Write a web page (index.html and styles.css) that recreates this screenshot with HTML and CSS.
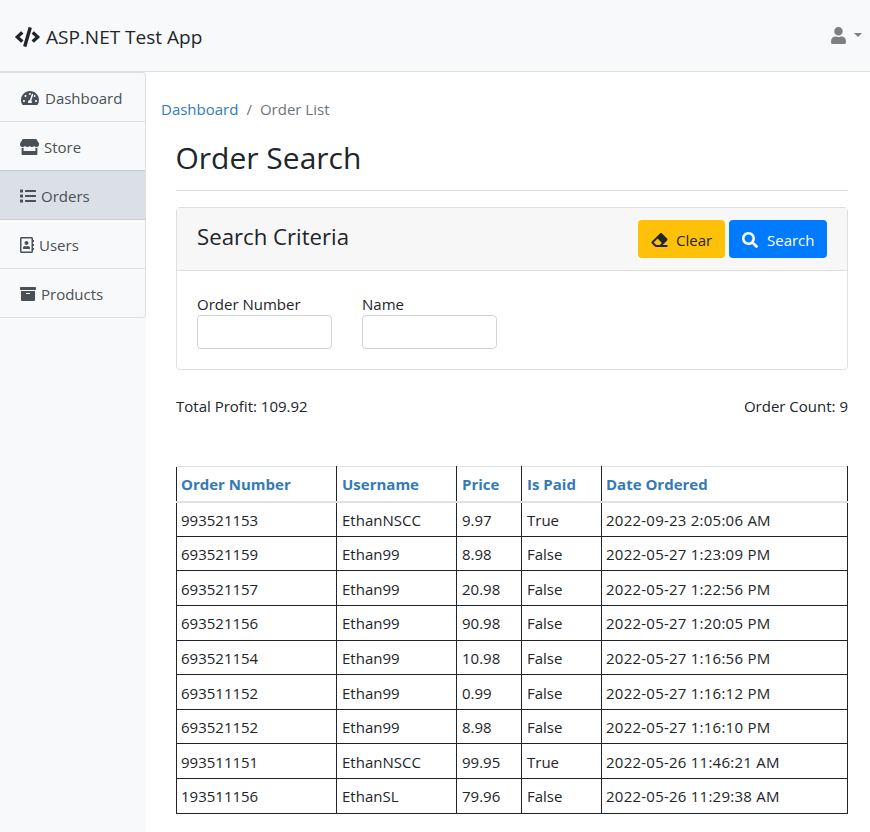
FILE: index.html
```html
<!DOCTYPE html>
<html lang="en">
<head>
    <meta charset="UTF-8">
    <title>Order Search</title>
    <link rel="stylesheet" href="styles.css">
</head>
<body>
    <header class="topbar">
        <a class="brand" href="#">
            <svg class="brand-icon" viewBox="0 0 640 512"><path d="M278.9 511.5l-61-17.7c-6.4-1.8-10-8.5-8.2-14.9L346.2 8.7c1.8-6.4 8.5-10 14.9-8.2l61 17.7c6.4 1.8 10 8.5 8.2 14.9L293.8 503.3c-1.9 6.4-8.5 10.1-14.9 8.2zm-114-112.2l43.5-46.4c4.6-4.9 4.3-12.7-.8-17.2L117 256l90.6-79.7c5.1-4.5 5.5-12.3.8-17.2l-43.5-46.4c-4.5-4.8-12.1-5.1-17-.5L3.8 247.2c-5.1 4.7-5.1 12.8 0 17.5l144.1 135.1c4.9 4.6 12.5 4.4 17-.5zm327.2.6l144.1-135.1c5.1-4.7 5.1-12.8 0-17.5L492.1 112.1c-4.8-4.5-12.4-4.3-17 .5L431.6 159c-4.6 4.9-4.3 12.7.8 17.2L523 256l-90.6 79.7c-5.1 4.5-5.5 12.3-.8 17.2l43.5 46.4c4.5 4.9 12.1 5.1 17 .6z"/></svg>
            <span>ASP.NET Test App</span>
        </a>
        <a class="user-menu" href="#">
            <svg class="user-icon" viewBox="0 0 448 512"><path d="M224 256c70.7 0 128-57.3 128-128S294.7 0 224 0 96 57.3 96 128s57.3 128 128 128zm89.6 32h-16.7c-22.2 10.2-46.9 16-72.9 16s-50.6-5.8-72.9-16h-16.7C60.2 288 0 348.2 0 422.4V464c0 26.5 21.5 48 48 48h352c26.5 0 48-21.5 48-48v-41.6c0-74.2-60.2-134.4-134.4-134.4z"/></svg>
            <span class="caret"></span>
        </a>
    </header>
    <div class="layout">
        <aside class="sidebar">
            <nav class="side-list">
                <a class="side-item side-dashboard" href="#">
                    <svg class="side-icon dash" viewBox="0 0 576 512"><path d="M288 32C128.94 32 0 160.94 0 320c0 52.8 14.25 102.26 39.06 144.8 5.61 9.62 16.3 15.2 27.44 15.2h443c11.14 0 21.83-5.58 27.44-15.2C561.75 422.26 576 372.8 576 320c0-159.06-128.94-288-288-288zm0 64c14.71 0 26.58 10.13 30.32 23.65-1.11 2.26-2.64 4.23-3.45 6.67l-9.22 27.67c-5.13 3.49-10.97 6.01-17.64 6.01-17.67 0-32-14.33-32-32S270.33 96 288 96zM96 384c-17.67 0-32-14.33-32-32s14.33-32 32-32 32 14.33 32 32-14.33 32-32 32zm48-160c-17.67 0-32-14.33-32-32s14.33-32 32-32 32 14.33 32 32-14.33 32-32 32zm246.77-72.41l-61.33 184C343.13 347.33 352 364.54 352 384c0 11.72-3.38 22.55-8.88 32H232.88c-5.5-9.45-8.88-20.28-8.88-32 0-33.94 26.5-61.43 59.9-63.59l61.34-184.01c4.17-12.56 17.73-19.45 30.36-15.17 12.57 4.19 19.35 17.79 15.17 30.36zm14.66 57.2l15.52-46.55c3.47-1.29 7.13-2.23 11.05-2.23 17.67 0 32 14.33 32 32s-14.33 32-32 32c-11.38-.01-20.89-6.28-26.57-15.22zM480 384c-17.67 0-32-14.33-32-32s14.33-32 32-32 32 14.33 32 32-14.33 32-32 32z"/></svg>
                    <span>Dashboard</span>
                </a>
                <a class="side-item" href="#">
                    <svg class="side-icon store" viewBox="0 0 616 512"><path d="M602 118.6L537.1 15C531.3 5.7 521 0 510 0H106C95 0 84.7 5.7 78.9 15L14 118.6c-33.9 54.1-3.9 129.3 59.4 137.9 4.6.6 9.2.9 13.7.9 29.9 0 56.4-13.1 74.6-33.4 18.2 20.2 44.8 33.4 74.6 33.4 29.9 0 56.4-13.1 74.6-33.4 18.2 20.2 44.8 33.4 74.6 33.4 30 0 56.5-13.1 74.7-33.4 18.2 20.2 44.8 33.4 74.6 33.4 4.6 0 9.1-.3 13.7-.9 63.5-8.5 93.6-83.7 59.6-137.9zM529.5 288c-10 0-19.9-1.5-29.5-3.8V384H116v-99.8c-9.6 2.2-19.5 3.8-29.5 3.8-6 0-12.1-.4-18-1.2-5.6-.8-11.1-2.1-16.4-3.6V480c0 17.7 14.3 32 32 32h448c17.7 0 32-14.3 32-32V283.2c-5.4 1.6-10.8 2.9-16.4 3.6-6.1.8-12.1 1.2-18.2 1.2z"/></svg>
                    <span>Store</span>
                </a>
                <a class="side-item active" href="#">
                    <svg class="side-icon list" viewBox="0 0 512 512"><path d="M80 368H16a16 16 0 0 0-16 16v64a16 16 0 0 0 16 16h64a16 16 0 0 0 16-16v-64a16 16 0 0 0-16-16zm0-320H16A16 16 0 0 0 0 64v64a16 16 0 0 0 16 16h64a16 16 0 0 0 16-16V64a16 16 0 0 0-16-16zm0 160H16a16 16 0 0 0-16 16v64a16 16 0 0 0 16 16h64a16 16 0 0 0 16-16v-64a16 16 0 0 0-16-16zm416 176H176a16 16 0 0 0-16 16v32a16 16 0 0 0 16 16h320a16 16 0 0 0 16-16v-32a16 16 0 0 0-16-16zm0-320H176a16 16 0 0 0-16 16v32a16 16 0 0 0 16 16h320a16 16 0 0 0 16-16V80a16 16 0 0 0-16-16zm0 160H176a16 16 0 0 0-16 16v32a16 16 0 0 0 16 16h320a16 16 0 0 0 16-16v-32a16 16 0 0 0-16-16z"/></svg>
                    <span>Orders</span>
                </a>
                <a class="side-item" href="#">
                    <svg class="side-icon book" viewBox="0 0 448 512"><path d="M436 160c6.6 0 12-5.4 12-12v-40c0-6.6-5.4-12-12-12h-20V48c0-26.5-21.5-48-48-48H48C21.5 0 0 21.5 0 48v416c0 26.5 21.5 48 48 48h320c26.5 0 48-21.5 48-48v-48h20c6.6 0 12-5.4 12-12v-40c0-6.6-5.4-12-12-12h-20v-64h20c6.6 0 12-5.4 12-12v-40c0-6.6-5.4-12-12-12h-20v-64h20zm-68 304H48V48h320v416zM208 256c35.3 0 64-28.7 64-64s-28.7-64-64-64-64 28.7-64 64 28.7 64 64 64zm-89.6 128h179.2c12.4 0 22.4-8.6 22.4-19.2v-19.2c0-31.8-30.1-57.6-67.2-57.6-10.8 0-18.7 8-44.8 8-26.9 0-33.4-8-44.8-8-37.1 0-67.2 25.8-67.2 57.6v19.2c0 10.6 10 19.2 22.4 19.2z"/></svg>
                    <span>Users</span>
                </a>
                <a class="side-item" href="#">
                    <svg class="side-icon list" viewBox="0 0 512 512"><path d="M32 448c0 17.7 14.3 32 32 32h384c17.7 0 32-14.3 32-32V160H32v288zm160-212c0-6.6 5.4-12 12-12h104c6.6 0 12 5.4 12 12v8c0 6.6-5.4 12-12 12H204c-6.6 0-12-5.4-12-12v-8zM480 32H32C14.3 32 0 46.3 0 64v48c0 8.8 7.2 16 16 16h480c8.8 0 16-7.2 16-16V64c0-17.7-14.3-32-32-32z"/></svg>
                    <span>Products</span>
                </a>
            </nav>
        </aside>
        <main class="content">
            <ol class="breadcrumb">
                <li><a href="#">Dashboard</a></li>
                <li class="crumb-sep">/</li>
                <li class="crumb-current">Order List</li>
            </ol>
            <div class="page">
                <h1 class="page-title">Order Search</h1>
                <section class="card">
                    <div class="card-header">
                        <h2 class="card-title">Search Criteria</h2>
                        <div class="card-actions">
                            <button class="btn btn-clear" type="button">
                                <svg class="btn-icon" viewBox="0 0 512 512"><path d="M497.941 273.941c18.745-18.745 18.745-49.137 0-67.882l-160-160c-18.745-18.745-49.136-18.746-67.883 0l-256 256c-18.745 18.745-18.745 49.137 0 67.882l96 96A48.004 48.004 0 0 0 144 480h356c6.627 0 12-5.373 12-12v-40c0-6.627-5.373-12-12-12H355.883l142.058-142.059zm-302.627-62.627l137.373 137.373L265.373 416H150.628l-80-80 124.686-124.686z"/></svg>
                                <span>Clear</span>
                            </button>
                            <button class="btn btn-search" type="button">
                                <svg class="btn-icon" viewBox="0 0 512 512"><path d="M505 442.7L405.3 343c-4.5-4.5-10.6-7-17-7H372c27.6-35.3 44-79.7 44-128C416 93.1 322.9 0 208 0S0 93.1 0 208s93.1 208 208 208c48.3 0 92.7-16.4 128-44v16.3c0 6.4 2.5 12.5 7 17l99.7 99.7c9.4 9.4 24.6 9.4 33.9 0l28.3-28.3c9.4-9.4 9.4-24.6.1-34zM208 336c-70.7 0-128-57.2-128-128 0-70.7 57.2-128 128-128 70.7 0 128 57.2 128 128 0 70.7-57.2 128-128 128z"/></svg>
                                <span>Search</span>
                            </button>
                        </div>
                    </div>
                    <form class="card-body">
                        <label class="field">
                            <span>Order Number</span>
                            <input type="text">
                        </label>
                        <label class="field">
                            <span>Name</span>
                            <input type="text">
                        </label>
                    </form>
                </section>
                <div class="totals">
                    <span>Total Profit: 109.92</span>
                    <span>Order Count: 9</span>
                </div>
                <table class="orders">
                    <colgroup>
                        <col class="col-number">
                        <col class="col-user">
                        <col class="col-price">
                        <col class="col-paid">
                        <col>
                    </colgroup>
                    <thead>
                        <tr>
                            <th><a href="#">Order Number</a></th>
                            <th><a href="#">Username</a></th>
                            <th><a href="#">Price</a></th>
                            <th><a href="#">Is Paid</a></th>
                            <th><a href="#">Date Ordered</a></th>
                        </tr>
                    </thead>
                    <tbody>
                        <tr><td>993521153</td><td>EthanNSCC</td><td>9.97</td><td>True</td><td>2022-09-23 2:05:06 AM</td></tr>
                        <tr><td>693521159</td><td>Ethan99</td><td>8.98</td><td>False</td><td>2022-05-27 1:23:09 PM</td></tr>
                        <tr><td>693521157</td><td>Ethan99</td><td>20.98</td><td>False</td><td>2022-05-27 1:22:56 PM</td></tr>
                        <tr><td>693521156</td><td>Ethan99</td><td>90.98</td><td>False</td><td>2022-05-27 1:20:05 PM</td></tr>
                        <tr><td>693521154</td><td>Ethan99</td><td>10.98</td><td>False</td><td>2022-05-27 1:16:56 PM</td></tr>
                        <tr><td>693511152</td><td>Ethan99</td><td>0.99</td><td>False</td><td>2022-05-27 1:16:12 PM</td></tr>
                        <tr><td>693521152</td><td>Ethan99</td><td>8.98</td><td>False</td><td>2022-05-27 1:16:10 PM</td></tr>
                        <tr><td>993511151</td><td>EthanNSCC</td><td>99.95</td><td>True</td><td>2022-05-26 11:46:21 AM</td></tr>
                        <tr><td>193511156</td><td>EthanSL</td><td>79.96</td><td>False</td><td>2022-05-26 11:29:38 AM</td></tr>
                    </tbody>
                </table>
            </div>
        </main>
    </div>
</body>
</html>
```

FILE: styles.css
```css
* {
    box-sizing: border-box;
}
body, html {
    margin: 0;
    padding: 0;
    height: 100%;
    overflow: hidden;
}
body {
    font-family: "Open Sans", "Noto Sans", sans-serif;
    font-size: 15px;
    color: #212529;
    background-color: #ffffff;
}
a {
    text-decoration: none;
}
.topbar {
    height: 72px;
    padding: 2px 8px 0 15px;
    display: flex;
    justify-content: space-between;
    align-items: center;
    background-color: #f8f9fa;
    border-bottom: 1px solid #dfdfdf;
}
.brand {
    display: flex;
    align-items: center;
    color: #212529;
    font-size: 19px;
}
.brand-icon {
    width: 25px;
    height: 20px;
    margin-right: 6px;
    fill: #212529;
}
.user-menu {
    display: flex;
    align-items: center;
    margin-top: -2px;
}
.user-icon {
    width: 15px;
    height: 17px;
    fill: #7f7f7f;
}
.caret {
    margin-left: 8px;
    margin-top: -2px;
    border-top: 4px solid #7f7f7f;
    border-left: 4px solid transparent;
    border-right: 4px solid transparent;
}
.layout {
    display: flex;
    height: 760px;
}
.sidebar {
    width: 146px;
    flex-shrink: 0;
    background-color: #f8f9fa;
}
.side-list {
    display: flex;
    flex-direction: column;
    border: 1px solid #dfdfdf;
    border-left: 0;
    border-radius: 0 4px 4px 0;
}
.side-item {
    height: 49px;
    padding-top: 2px;
    padding-left: 20px;
    display: flex;
    align-items: center;
    color: #495057;
    border-bottom: 1px solid #dfdfdf;
}
.side-item:last-child {
    height: 48px;
    border-bottom: 0;
}
.side-dashboard {
    padding-left: 21px;
}
.side-item.active {
    background-color: #dae0e5;
    border-bottom-color: #c6ccd1;
    box-shadow: 0 -1px 0 #c6ccd1;
}
.side-icon {
    fill: #495057;
    height: 16px;
    margin-right: 5px;
    flex-shrink: 0;
}
.dash {
    width: 18px;
    margin-right: 6px;
}
.store {
    width: 19px;
}
.list {
    width: 16px;
}
.book {
    width: 14px;
}
.content {
    flex: 1;
    min-width: 0;
    padding: 26px 22px 0 15px;
}
.breadcrumb {
    list-style: none;
    margin: 0;
    padding: 0;
    display: flex;
    gap: 8px;
    line-height: 22px;
}
.breadcrumb a {
    color: #337ab7;
}
.crumb-sep, .crumb-current {
    color: #6c757d;
}
.page {
    padding-left: 15px;
}
.page-title {
    margin: 18px 0 0;
    padding-bottom: 12px;
    font-size: 30px;
    font-weight: 400;
    line-height: 40px;
    border-bottom: 1px solid #e2e2e2;
    text-indent: -0.5px;
}
.card {
    margin-top: 16px;
    border: 1px solid #dfdfdf;
    border-radius: 4px;
}
.card-header {
    height: 63px;
    padding: 12px 20px;
    display: flex;
    justify-content: space-between;
    background-color: #f7f7f7;
    border-bottom: 1px solid #dfdfdf;
}
.card-title {
    margin: 0;
    font-size: 22.2px;
    font-weight: 400;
    line-height: 33px;
}
.card-actions {
    display: flex;
    gap: 4px;
}
.btn {
    height: 38px;
    padding-top: 2px;
    display: flex;
    align-items: center;
    font-family: inherit;
    font-size: 15px;
    border: 0;
    border-radius: 4px;
}
.btn-icon {
    width: 16px;
    height: 16px;
    margin-right: 8px;
    fill: currentColor;
}
.btn-clear {
    width: 87px;
    padding-left: 13px;
    color: #212529;
    background-color: #ffc107;
}
.btn-clear .btn-icon {
    width: 17px;
}
.btn-search {
    width: 98px;
    padding-left: 13px;
    color: #ffffff;
    background-color: #007bff;
}
.btn-search .btn-icon {
    margin-right: 9px;
}
.card-body {
    height: 98px;
    padding: 23px 20px 0;
    display: flex;
    gap: 30px;
}
.field {
    width: 135px;
    display: flex;
    flex-direction: column;
    line-height: 21px;
}
.field input {
    height: 34px;
    width: 100%;
    border: 1px solid #ced4da;
    border-radius: 4px;
}
.totals {
    margin-top: 25px;
    display: flex;
    justify-content: space-between;
    line-height: 22px;
}
.orders {
    margin-top: 49px;
    width: 100%;
    table-layout: fixed;
    border-collapse: collapse;
}
.col-number {
    width: 160px;
}
.col-user {
    width: 120px;
}
.col-price {
    width: 65px;
}
.col-paid {
    width: 80px;
}
.orders th {
    height: 35px;
    padding: 0 4px 0 5px;
    text-align: left;
    border: 1px solid #212529;
    border-top-color: #dee2e6;
    border-bottom: 2px solid #dee2e6;
}
.orders th a {
    color: #337ab7;
}
.orders td {
    height: 34.65px;
    padding: 1px 4px 0 5px;
    border: 1px solid #212529;
}
.orders th:first-child, .orders td:first-child,
.orders th:last-child, .orders td:last-child {
    padding-left: 4px;
}
.orders td:last-child {
    letter-spacing: 0.24px;
}
```
